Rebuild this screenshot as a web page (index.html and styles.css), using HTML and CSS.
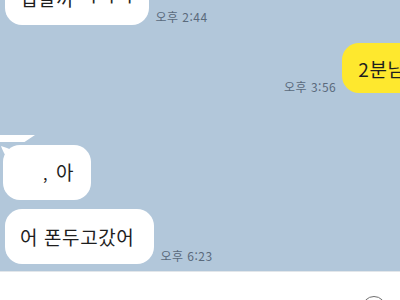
FILE: index.html
```html
<!DOCTYPE html>
<html lang="ko">
<head>
<meta charset="utf-8">
<link rel="stylesheet" href="styles.css">
</head>
<body>
<div class="screen">
  <main class="chat">
    <div class="row row-first">
      <div class="bubble">집갈까 ㅋㅋㅋ</div>
      <span class="time">오후 2:44</span>
    </div>
    <div class="row row-me">
      <span class="time time-me">오후 3:56</span>
      <div class="bubble bubble-me">2분남았어</div>
    </div>
    <div class="stripe"></div>
    <div class="row row-third">
      <div class="bubble bubble-tail">
        <svg class="tail" width="14" height="16" viewBox="0 0 14 16"><path d="M0 1 Q7 3 13 6 L13 15 Q6 14 3 8 Q1 4 0 1 Z" fill="#fff"/></svg>
        <span class="mark">,</span>아
      </div>
    </div>
    <div class="row row-fourth">
      <div class="bubble">어 폰두고갔어</div>
      <span class="time">오후 6:23</span>
    </div>
  </main>
  <footer class="footer">
    <span class="circle"></span>
  </footer>
</div>
</body>
</html>
```
FILE: styles.css
```css
* { box-sizing: border-box; }
html, body { margin: 0; padding: 0; }
body {
  width: 400px;
  height: 300px;
  overflow: hidden;
  font-family: "Noto Sans CJK KR", "Noto Sans", sans-serif;
  background: #ffffff;
}
.screen { width: 400px; height: 300px; display: flex; flex-direction: column; overflow: hidden; }
.chat {
  height: 271px;
  flex: none;
  background: #b2c7da;
  overflow: hidden;
  display: flex;
  flex-direction: column;
}
.row { display: flex; align-items: flex-end; gap: 6px; }
.bubble {
  position: relative;
  background: #ffffff;
  color: #1e1e1e;
  font-size: 19px;
  letter-spacing: 0.6px;
  line-height: 25px;
  padding: 15px 18px 15px 15px;
  border-radius: 17px;
  white-space: nowrap;
  flex: none;
}
.time {
  font-size: 12px;
  line-height: 14px;
  color: #5a6a7c;
  letter-spacing: 0.5px;
  margin-bottom: 1px;
  white-space: nowrap;
}
.row-first { margin-top: -30px; padding-left: 5px; }
.row-first .bubble { padding-right: 15px; }
.row-me { margin-top: 18px; padding-left: 284px; }
.bubble-me {
  background: #fee82e;
  padding: 13px 15px 12px 16px;
}
.time-me { margin-bottom: -1px; }
.stripe {
  margin-top: 42px;
  width: 35px;
  height: 7px;
  background: #ffffff;
  clip-path: polygon(0 0, 100% 0, 70% 100%, 0 100%);
}
.row-third { margin-top: 3px; padding-left: 3px; }
.bubble-tail { padding: 14px 17px 14px 40px; }
.tail { position: absolute; left: -2px; top: 0; }
.mark { margin-right: 8px; font-size: 16px; }
.row-fourth { margin-top: 9px; padding-left: 5px; }
.row-fourth .bubble { padding: 15px 20px 15px 15px; }
.footer {
  flex: 1;
  background: #ffffff;
  border-top: 1px solid #e2e6ea;
  display: flex;
  justify-content: flex-end;
  padding: 24px 14px 0 0;
  overflow: hidden;
}
.circle {
  width: 24px;
  height: 24px;
  border: 1.5px solid #6f6f6f;
  border-radius: 50%;
  flex: none;
}
```
